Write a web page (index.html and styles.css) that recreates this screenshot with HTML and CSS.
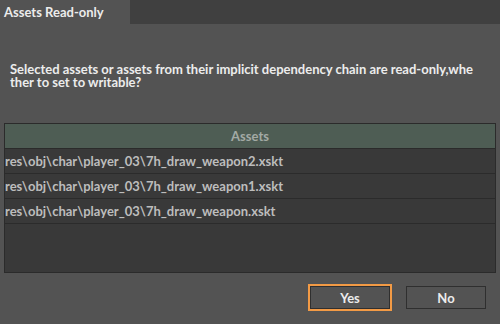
FILE: index.html
```html
<!DOCTYPE html>
<html lang="en">
<head>
  <meta charset="UTF-8" />
  <title>Assets Read-only</title>
  <link rel="stylesheet" href="styles.css">
</head>
<body>
  <div class="tabbar">
    <div class="tab">Assets Read-only</div>
  </div>
  <div class="dialog">
    <div class="message">Selected assets or assets from their implicit dependency chain are read-only,whe<br>ther to set to writable?</div>
    <div class="table">
      <div class="table-head">Assets</div>
      <div class="row">res\obj\char\player_03\7h_draw_weapon2.xskt</div>
      <div class="row">res\obj\char\player_03\7h_draw_weapon1.xskt</div>
      <div class="row">res\obj\char\player_03\7h_draw_weapon.xskt</div>
    </div>
    <div class="buttons">
      <div class="focus"><button class="btn">Yes</button></div>
      <button class="btn">No</button>
    </div>
  </div>
</body>
</html>
```
FILE: styles.css
```css
body {
  margin: 0;
  width: 500px;
  height: 324px;
  background-color: #535353;
  font-family: Lato, "Open Sans", sans-serif;
  color: #ececec;
  overflow: hidden;
}
.tabbar {
  display: flex;
  height: 24px;
  background-color: #404040;
}
.tab {
  width: 126px;
  padding-left: 4px;
  background-color: #535353;
  font-size: 13px;
  font-weight: bold;
  line-height: 24px;
}
.dialog {
  padding: 39px 4px 0 4px;
}
.message {
  padding-left: 6px;
  font-size: 13px;
  font-weight: bold;
  line-height: 13px;
}
.table {
  margin-top: 34px;
  height: 148px;
  background-color: #393939;
  border: 1px solid #2b2b2b;
}
.table-head {
  height: 24px;
  line-height: 24px;
  text-align: center;
  background-color: #4e5d54;
  color: #a3aaa5;
  font-size: 13px;
  font-weight: bold;
  border-bottom: 1px solid #2b2b2b;
}
.row {
  height: 24px;
  line-height: 24px;
  color: #bdbdbd;
  font-size: 13px;
  font-weight: bold;
  border-bottom: 1px solid #2b2b2b;
}
.buttons {
  display: flex;
  justify-content: flex-end;
  align-items: center;
  gap: 14px;
  margin-top: 11px;
  padding-right: 10px;
}
.focus {
  border: 2px solid #f29a45;
}
.btn {
  display: block;
  width: 80px;
  height: 23px;
  background-color: #535353;
  border: 1px solid #2f2f2f;
  color: #ececec;
  font-family: Lato, "Open Sans", sans-serif;
  font-size: 13px;
  font-weight: bold;
  padding: 0;
}
```
